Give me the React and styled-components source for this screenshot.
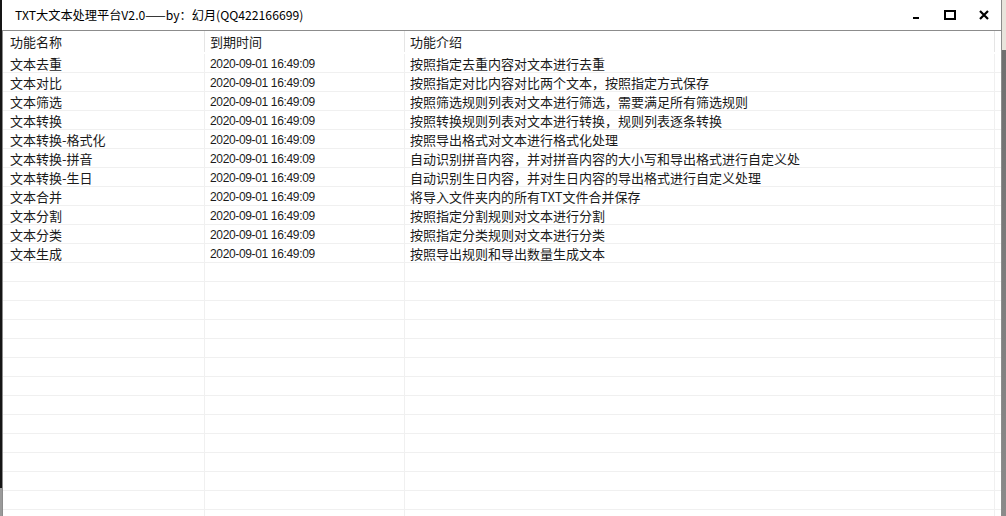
import React from 'react';
import styled, { createGlobalStyle } from 'styled-components';

const rows = [
  ['文本去重', '2020-09-01 16:49:09', '按照指定去重内容对文本进行去重'],
  ['文本对比', '2020-09-01 16:49:09', '按照指定对比内容对比两个文本，按照指定方式保存'],
  ['文本筛选', '2020-09-01 16:49:09', '按照筛选规则列表对文本进行筛选，需要满足所有筛选规则'],
  ['文本转换', '2020-09-01 16:49:09', '按照转换规则列表对文本进行转换，规则列表逐条转换'],
  ['文本转换-格式化', '2020-09-01 16:49:09', '按照导出格式对文本进行格式化处理'],
  ['文本转换-拼音', '2020-09-01 16:49:09', '自动识别拼音内容，并对拼音内容的大小写和导出格式进行自定义处'],
  ['文本转换-生日', '2020-09-01 16:49:09', '自动识别生日内容，并对生日内容的导出格式进行自定义处理'],
  ['文本合并', '2020-09-01 16:49:09', '将导入文件夹内的所有TXT文件合并保存'],
  ['文本分割', '2020-09-01 16:49:09', '按照指定分割规则对文本进行分割'],
  ['文本分类', '2020-09-01 16:49:09', '按照指定分类规则对文本进行分类'],
  ['文本生成', '2020-09-01 16:49:09', '按照导出规则和导出数量生成文本'],
];

const EMPTY_ROWS = 14;

const GlobalStyle = createGlobalStyle`
  html, body {
    margin: 0;
    padding: 0;
    height: 100%;
    overflow: hidden;
    background: #1c1c1c;
  }
  #root {
    height: 100%;
  }
  * {
    box-sizing: border-box;
  }
`;

const Screen = styled.div`
  display: flex;
  height: 516px;
  width: 1006px;
  font-family: "Noto Sans CJK SC", "Liberation Sans", sans-serif;
  font-size: 13px;
  color: #1a1a1a;
`;

const LeftEdge = styled.div`
  width: 2px;
  display: flex;
  flex-direction: column;
  .dark {
    height: 488px;
    background: #151515;
  }
  .light {
    flex: 1;
    background: #9a9a9a;
  }
`;

const RightEdge = styled.div`
  width: 4px;
  background: linear-gradient(to bottom, #e8e4dc 0, #e8e4dc 50px, #6f6f6f 50px, #8a8a8a 100%);
`;

const Window = styled.div`
  width: 1000px;
  display: flex;
  flex-direction: column;
  background: #fff;
  border-right: 1px solid #8c8c8c;
`;

const TitleBar = styled.div`
  height: 30px;
  display: flex;
  align-items: center;
  padding-left: 13px;
  background: #fff;
`;

const Title = styled.span`
  flex: 1;
  font-size: 12.2px;
  color: #000;
  margin-top: -1px;
`;

const Controls = styled.div`
  display: flex;
  align-items: center;
  height: 100%;
`;

const ControlButton = styled.div`
  width: 34px;
  height: 100%;
  display: flex;
  align-items: center;
  justify-content: center;
  svg {
    display: block;
  }
`;

const List = styled.div`
  flex: 1;
  border-top: 1px solid #8c8c8c;
  border-left: 1px solid #8c8c8c;
  overflow: hidden;
`;

const Row = styled.div`
  display: grid;
  grid-template-columns: 202px 200px 590px 1fr;
  height: ${(p) => (p.$header ? '23px' : '19px')};
  border-bottom: 1px solid ${(p) => (p.$header ? 'transparent' : '#f0f0f0')};
`;

const Cell = styled.div`
  display: flex;
  align-items: center;
  padding-left: ${(p) => (p.$first ? '7px' : '5px')};
  border-right: 1px solid ${(p) => (p.$header ? '#e5e5e5' : '#f0f0f0')};
  white-space: nowrap;
  overflow: hidden;
  line-height: 1;
  ${(p) => p.$header && 'margin-bottom: 1px;'}
  ${(p) => p.$date && `
    font-family: "Liberation Sans", sans-serif;
    font-size: 12px;
    letter-spacing: -0.35px;
    padding-top: 2px;
  `}
  &:last-child {
    border-right: none;
  }
`;

const Minimize = () => (
  <svg width="10" height="10" viewBox="0 0 10 10">
    <rect x="2" y="7" width="6" height="2" fill="#000" />
  </svg>
);

const Maximize = () => (
  <svg width="12" height="10" viewBox="0 0 12 10">
    <rect x="1" y="1" width="10" height="8" fill="none" stroke="#000" strokeWidth="2" />
  </svg>
);

const Close = () => (
  <svg width="10" height="10" viewBox="0 0 10 10">
    <path d="M1 1 L9 9 M9 1 L1 9" stroke="#000" strokeWidth="2.2" />
  </svg>
);

export default function App() {
  return (
    <Screen>
      <GlobalStyle />
      <LeftEdge>
        <div className="dark" />
        <div className="light" />
      </LeftEdge>
      <Window>
        <TitleBar>
          <Title>TXT大文本处理平台V2.0——by：幻月(QQ422166699)</Title>
          <Controls>
            <ControlButton><Minimize /></ControlButton>
            <ControlButton><Maximize /></ControlButton>
            <ControlButton><Close /></ControlButton>
          </Controls>
        </TitleBar>
        <List>
          <Row $header>
            <Cell $header $first>功能名称</Cell>
            <Cell $header>到期时间</Cell>
            <Cell $header>功能介绍</Cell>
            <Cell $header />
          </Row>
          {rows.map(([name, date, desc]) => (
            <Row key={name}>
              <Cell $first>{name}</Cell>
              <Cell $date>{date}</Cell>
              <Cell>{desc}</Cell>
              <Cell />
            </Row>
          ))}
          {Array.from({ length: EMPTY_ROWS }, (_, i) => (
            <Row key={`empty-${i}`}>
              <Cell $first />
              <Cell />
              <Cell />
              <Cell />
            </Row>
          ))}
        </List>
      </Window>
      <RightEdge />
    </Screen>
  );
}
